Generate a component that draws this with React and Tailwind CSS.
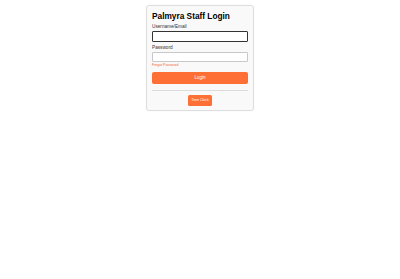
import React, { useState } from "react";

const StaffLogin = () => {
  const [user, setUser] = useState("");
  const [password, setPassword] = useState("");

  return (
    <div className="min-h-screen bg-white flex justify-center pt-[5px] font-['Liberation_Sans',Arial,sans-serif] text-black">
      <div className="w-[108px] h-[106px] bg-[#f9f9f9] border border-[#dedede] rounded-[3px] px-[5px] pt-[5px] flex flex-col shadow-[0_0_2px_rgba(0,0,0,0.05)]">
        <h2 className="text-[8.3px] leading-[10px] font-bold">Palmyra Staff Login</h2>

        <label htmlFor="user" className="mt-[3px] text-[4.7px] leading-[6px] text-[#333]">
          Username/Email
        </label>
        <input
          id="user"
          value={user}
          onChange={(e) => setUser(e.target.value)}
          className="mt-[1px] h-[11px] w-full bg-white border border-[#333] rounded-[1px] outline-none"
        />

        <label htmlFor="password" className="mt-[3px] text-[4.7px] leading-[6px] text-[#333]">
          Password
        </label>
        <input
          id="password"
          type="password"
          value={password}
          onChange={(e) => setPassword(e.target.value)}
          className="mt-[0.5px] h-[10.5px] w-full bg-white border border-[#c8c8c8] rounded-[1px] outline-none"
        />

        <a href="#" className="mt-[0.5px] text-[3.5px] leading-[5px] text-[#f26b32]">
          Forgot Password
        </a>

        <button className="mt-[4.5px] h-[12px] w-full bg-[#fd6f35] text-white text-[4.5px] rounded-[2px]">
          Login
        </button>

        <hr className="mt-[5.5px] border-t border-[#dcdcdc]" />

        <div className="flex justify-center mt-[4.5px]">
          <button className="w-[24px] h-[10.5px] bg-[#fd6f35] text-white text-[3.5px] rounded-[1.5px]">
            Time Clock
          </button>
        </div>
      </div>
    </div>
  );
};

export default function App() {
  return <StaffLogin />;
}
